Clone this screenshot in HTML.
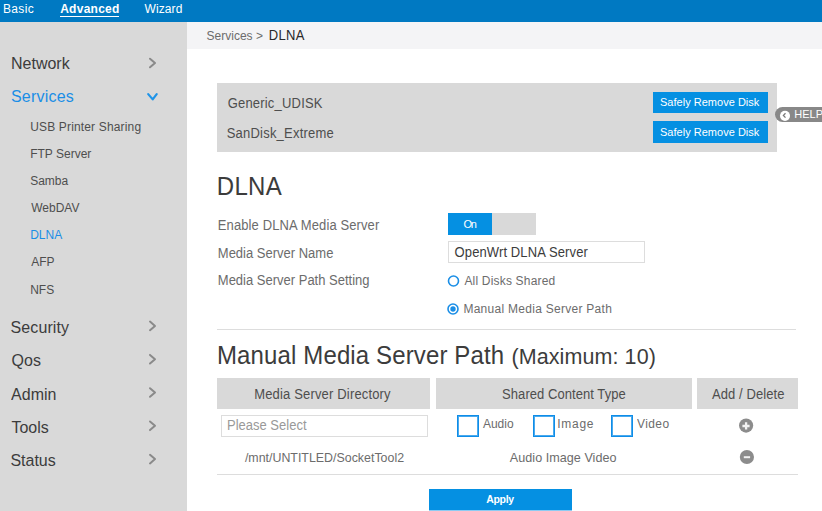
<!DOCTYPE html>
<html><head><meta charset="utf-8"><style>
html,body{margin:0;padding:0;width:822px;height:511px;overflow:hidden;background:#fff;position:relative;font-family:"Liberation Sans", sans-serif;}
body>div,body>svg{position:absolute;}
.t{white-space:nowrap;}
</style></head><body>
<div style="left:0px;top:0px;width:822px;height:22px;background:#0079c2;"></div>
<div style="left:60px;top:16px;width:59px;height:1px;background:#fff;"></div>
<div style="left:0px;top:22px;width:187px;height:489px;background:#d9d9d9;"></div>
<div style="left:187px;top:22px;width:635px;height:27px;background:#f4f4f6;"></div>
<div style="left:217px;top:83px;width:560px;height:69px;background:#d9d9d9;"></div>
<div style="left:653px;top:92px;width:115px;height:21px;background:#0590e2;"></div>
<div style="left:653px;top:121px;width:115px;height:22px;background:#0590e2;"></div>
<div style="left:775px;top:107px;width:55px;height:15px;background:#888;border-radius:8px 0 0 8px;"></div>
<div style="left:448px;top:213px;width:44px;height:22px;background:#0590e2;"></div>
<div style="left:492px;top:213px;width:44px;height:22px;background:#d9d9d9;"></div>
<div style="left:448px;top:241px;width:197px;height:22px;background:#fff;border:1px solid #ddd;box-sizing:border-box;"></div>
<div style="left:217px;top:329px;width:579px;height:1px;background:#ddd;"></div>
<div style="left:217px;top:378px;width:213px;height:31px;background:#d9d9d9;"></div>
<div style="left:436px;top:378px;width:256px;height:31px;background:#d9d9d9;"></div>
<div style="left:697px;top:378px;width:101px;height:31px;background:#d9d9d9;"></div>
<div style="left:221px;top:415px;width:207px;height:22px;background:#fff;border:1px solid #ddd;box-sizing:border-box;"></div>
<div style="left:457px;top:415px;width:22px;height:22px;background:#fff;border:1px solid #0e8de8;box-shadow:inset 0 0 0 1px rgba(14,141,232,0.75);box-sizing:border-box;"></div>
<div style="left:533px;top:415px;width:22px;height:22px;background:#fff;border:1px solid #0e8de8;box-shadow:inset 0 0 0 1px rgba(14,141,232,0.75);box-sizing:border-box;"></div>
<div style="left:611px;top:415px;width:22px;height:22px;background:#fff;border:1px solid #0e8de8;box-shadow:inset 0 0 0 1px rgba(14,141,232,0.75);box-sizing:border-box;"></div>
<div style="left:217px;top:474px;width:581px;height:1px;background:#ddd;"></div>
<div style="left:429px;top:489px;width:143px;height:21px;background:#0590e2;"></div>
<div style="left:429px;top:510px;width:143px;height:1px;background:#8ccbf2;"></div>
<div class="t" style="left:3.00px;top:3px;font-size:12px;line-height:12px;color:#fff;font-weight:400;letter-spacing:0.325px;transform:scaleY(1.06);transform-origin:0 10px;">Basic</div>
<div class="t" style="left:60.20px;top:3px;font-size:12px;line-height:12px;color:#fff;font-weight:700;letter-spacing:0.257px;transform:scaleY(1.06);transform-origin:0 10px;">Advanced</div>
<div class="t" style="left:144.50px;top:3px;font-size:12px;line-height:12px;color:#fff;font-weight:400;letter-spacing:0.100px;transform:scaleY(1.06);transform-origin:0 10px;">Wizard</div>
<div class="t" style="left:11.00px;top:56px;font-size:16px;line-height:16px;color:#3c3c3c;font-weight:400;letter-spacing:0.000px;transform:scaleY(1.06);transform-origin:0 13px;">Network</div>
<div class="t" style="left:11.00px;top:89px;font-size:16px;line-height:16px;color:#1a8ee6;font-weight:400;letter-spacing:0.200px;transform:scaleY(1.06);transform-origin:0 13px;">Services</div>
<div class="t" style="left:10.60px;top:320px;font-size:16px;line-height:16px;color:#3c3c3c;font-weight:400;letter-spacing:0.086px;transform:scaleY(1.06);transform-origin:0 13px;">Security</div>
<div class="t" style="left:11.60px;top:353px;font-size:16px;line-height:16px;color:#3c3c3c;font-weight:400;letter-spacing:0.000px;transform:scaleY(1.06);transform-origin:0 13px;">Qos</div>
<div class="t" style="left:11.10px;top:387px;font-size:16px;line-height:16px;color:#3c3c3c;font-weight:400;letter-spacing:0.000px;transform:scaleY(1.06);transform-origin:0 13px;">Admin</div>
<div class="t" style="left:11.40px;top:420px;font-size:16px;line-height:16px;color:#3c3c3c;font-weight:400;letter-spacing:0.000px;transform:scaleY(1.06);transform-origin:0 13px;">Tools</div>
<div class="t" style="left:10.40px;top:453px;font-size:16px;line-height:16px;color:#3c3c3c;font-weight:400;letter-spacing:0.000px;transform:scaleY(1.06);transform-origin:0 13px;">Status</div>
<div class="t" style="left:30.20px;top:121px;font-size:12px;line-height:12px;color:#4e4e4e;font-weight:400;letter-spacing:0.158px;transform:scaleY(1.06);transform-origin:0 10px;">USB Printer Sharing</div>
<div class="t" style="left:30.20px;top:148px;font-size:12px;line-height:12px;color:#4e4e4e;font-weight:400;letter-spacing:0.000px;transform:scaleY(1.06);transform-origin:0 10px;">FTP Server</div>
<div class="t" style="left:30.20px;top:175px;font-size:12px;line-height:12px;color:#4e4e4e;font-weight:400;letter-spacing:0.000px;transform:scaleY(1.06);transform-origin:0 10px;">Samba</div>
<div class="t" style="left:31.20px;top:202px;font-size:12px;line-height:12px;color:#4e4e4e;font-weight:400;letter-spacing:0.000px;transform:scaleY(1.06);transform-origin:0 10px;">WebDAV</div>
<div class="t" style="left:30.20px;top:229px;font-size:12px;line-height:12px;color:#1a8ee6;font-weight:400;letter-spacing:0.000px;transform:scaleY(1.06);transform-origin:0 10px;">DLNA</div>
<div class="t" style="left:31.20px;top:256px;font-size:12px;line-height:12px;color:#4e4e4e;font-weight:400;letter-spacing:0.000px;transform:scaleY(1.06);transform-origin:0 10px;">AFP</div>
<div class="t" style="left:30.20px;top:284px;font-size:12px;line-height:12px;color:#4e4e4e;font-weight:400;letter-spacing:0.000px;transform:scaleY(1.06);transform-origin:0 10px;">NFS</div>
<div class="t" style="left:206.60px;top:30px;font-size:12px;line-height:12px;color:#6c6c6c;font-weight:400;letter-spacing:0.000px;transform:scaleY(1.06);transform-origin:0 10px;">Services &gt;</div>
<div class="t" style="left:268.80px;top:29px;font-size:13px;line-height:13px;color:#2a2a2a;font-weight:400;letter-spacing:0.333px;transform:scaleY(1.06);transform-origin:0 11px;">DLNA</div>
<div class="t" style="left:227.70px;top:97px;font-size:13px;line-height:13px;color:#4e4e4e;font-weight:400;letter-spacing:0.192px;transform:scaleY(1.06);transform-origin:0 11px;">Generic_UDISK</div>
<div class="t" style="left:226.70px;top:127px;font-size:13px;line-height:13px;color:#4e4e4e;font-weight:400;letter-spacing:0.214px;transform:scaleY(1.06);transform-origin:0 11px;">SanDisk_Extreme</div>
<div class="t" style="left:660.00px;top:97px;font-size:11px;line-height:11px;color:#fff;font-weight:400;letter-spacing:0.018px;transform:scaleY(1.06);transform-origin:0 9px;">Safely Remove Disk</div>
<div class="t" style="left:660.00px;top:127px;font-size:11px;line-height:11px;color:#fff;font-weight:400;letter-spacing:0.018px;transform:scaleY(1.06);transform-origin:0 9px;">Safely Remove Disk</div>
<div class="t" style="left:794.30px;top:109px;font-size:11px;line-height:11px;color:#fff;font-weight:400;letter-spacing:0.000px;transform:scaleY(1.06);transform-origin:0 9px;">HELP</div>
<div class="t" style="left:216.80px;top:175px;font-size:24px;line-height:24px;color:#3c3c3c;font-weight:400;letter-spacing:0.300px;transform:scaleY(1.11);transform-origin:0 20px;">DLNA</div>
<div class="t" style="left:217.80px;top:219px;font-size:13px;line-height:13px;color:#6c6c6c;font-weight:400;letter-spacing:0.109px;transform:scaleY(1.06);transform-origin:0 11px;">Enable DLNA Media Server</div>
<div class="t" style="left:217.80px;top:247px;font-size:13px;line-height:13px;color:#6c6c6c;font-weight:400;letter-spacing:0.000px;transform:scaleY(1.06);transform-origin:0 11px;">Media Server Name</div>
<div class="t" style="left:217.80px;top:274px;font-size:13px;line-height:13px;color:#6c6c6c;font-weight:400;letter-spacing:0.000px;transform:scaleY(1.06);transform-origin:0 11px;">Media Server Path Setting</div>
<div class="t" style="left:463.40px;top:219px;font-size:11px;line-height:11px;color:#fff;font-weight:400;letter-spacing:-1.200px;transform:scaleY(1.06);transform-origin:0 9px;">On</div>
<div class="t" style="left:454.60px;top:246px;font-size:13px;line-height:13px;color:#3c3c3c;font-weight:400;letter-spacing:0.111px;transform:scaleY(1.06);transform-origin:0 11px;">OpenWrt DLNA Server</div>
<div class="t" style="left:464.40px;top:275px;font-size:12px;line-height:12px;color:#6c6c6c;font-weight:400;letter-spacing:0.187px;transform:scaleY(1.06);transform-origin:0 10px;">All Disks Shared</div>
<div class="t" style="left:463.40px;top:303px;font-size:12px;line-height:12px;color:#6c6c6c;font-weight:400;letter-spacing:0.278px;transform:scaleY(1.06);transform-origin:0 10px;">Manual Media Server Path</div>
<div class="t" style="left:217.00px;top:344px;font-size:24px;line-height:24px;color:#3c3c3c;font-weight:400;letter-spacing:0.130px;transform:scaleY(1.06);transform-origin:0 20px;">Manual Media Server Path</div>
<div class="t" style="left:511.40px;top:347px;font-size:21.5px;line-height:21.5px;color:#3c3c3c;font-weight:400;letter-spacing:0.092px;transform:scaleY(1.06);transform-origin:0 17px;">(Maximum: 10)</div>
<div class="t" style="left:254.20px;top:388px;font-size:13px;line-height:13px;color:#4e4e4e;font-weight:400;letter-spacing:0.167px;transform:scaleY(1.06);transform-origin:0 11px;">Media Server Directory</div>
<div class="t" style="left:502.10px;top:388px;font-size:13px;line-height:13px;color:#4e4e4e;font-weight:400;letter-spacing:0.056px;transform:scaleY(1.06);transform-origin:0 11px;">Shared Content Type</div>
<div class="t" style="left:711.90px;top:388px;font-size:13px;line-height:13px;color:#4e4e4e;font-weight:400;letter-spacing:0.100px;transform:scaleY(1.06);transform-origin:0 11px;">Add / Delete</div>
<div class="t" style="left:227.00px;top:419px;font-size:13px;line-height:13px;color:#999;font-weight:400;letter-spacing:0.000px;transform:scaleY(1.06);transform-origin:0 11px;">Please Select</div>
<div class="t" style="left:482.90px;top:418px;font-size:12px;line-height:12px;color:#6c6c6c;font-weight:400;letter-spacing:0.025px;transform:scaleY(1.06);transform-origin:0 10px;">Audio</div>
<div class="t" style="left:557.30px;top:418px;font-size:12px;line-height:12px;color:#6c6c6c;font-weight:400;letter-spacing:0.700px;transform:scaleY(1.06);transform-origin:0 10px;">Image</div>
<div class="t" style="left:637.00px;top:418px;font-size:12px;line-height:12px;color:#6c6c6c;font-weight:400;letter-spacing:0.400px;transform:scaleY(1.06);transform-origin:0 10px;">Video</div>
<div class="t" style="left:244.90px;top:452px;font-size:12.4px;line-height:12.4px;color:#6c6c6c;font-weight:400;letter-spacing:0.004px;transform:scaleY(1.06);transform-origin:0 10px;">/mnt/UNTITLED/SocketTool2</div>
<div class="t" style="left:509.80px;top:452px;font-size:12.6px;line-height:12.6px;color:#6c6c6c;font-weight:400;letter-spacing:0.031px;transform:scaleY(1.06);transform-origin:0 10px;">Audio Image Video</div>
<div class="t" style="left:486.20px;top:494px;font-size:10.5px;line-height:10.5px;color:#fff;font-weight:700;letter-spacing:-0.300px;transform:scaleY(1.06);transform-origin:0 9px;">Apply</div>
<svg style="left:446px;top:274px" width="14" height="14" viewBox="0 0 14 14"><circle cx="7.5" cy="7" r="5" fill="none" stroke="#1a8ee6" stroke-width="1.6"/></svg>
<svg style="left:446px;top:302px" width="14" height="14" viewBox="0 0 14 14"><circle cx="7" cy="7" r="5" fill="none" stroke="#1a8ee6" stroke-width="1.6"/><circle cx="7" cy="7" r="2.7" fill="#1a8ee6"/></svg>
<svg style="left:0;top:0" width="822" height="511"><path d="M148.2 94.1 L152.7 99.4 L156.7 94.1" fill="none" stroke="#1f94e8" stroke-width="2.2" stroke-linecap="round" stroke-linejoin="round"/><path d="M150 58.70 L155 63.00 L150 67.30" fill="none" stroke="#8a8a8a" stroke-width="2" stroke-linecap="round" stroke-linejoin="round"/><path d="M150 321.60 L155 325.90 L150 330.20" fill="none" stroke="#8a8a8a" stroke-width="2" stroke-linecap="round" stroke-linejoin="round"/><path d="M150 354.90 L155 359.20 L150 363.50" fill="none" stroke="#8a8a8a" stroke-width="2" stroke-linecap="round" stroke-linejoin="round"/><path d="M150 388.20 L155 392.50 L150 396.80" fill="none" stroke="#8a8a8a" stroke-width="2" stroke-linecap="round" stroke-linejoin="round"/><path d="M150 421.50 L155 425.80 L150 430.10" fill="none" stroke="#8a8a8a" stroke-width="2" stroke-linecap="round" stroke-linejoin="round"/><path d="M150 454.80 L155 459.10 L150 463.40" fill="none" stroke="#8a8a8a" stroke-width="2" stroke-linecap="round" stroke-linejoin="round"/><circle cx="785" cy="115.85" r="5.05" fill="#fff"/><path d="M785.5 113.2 L783.4 115.4 L785.5 117.6" fill="none" stroke="#777" stroke-width="1.3"/><circle cx="746.1" cy="425.6" r="7.1" fill="#8c8c8c"/><path d="M742.4 426 H749.6 M746.1 422.2 V429.4" stroke="#f2f2f2" stroke-width="2.3"/><circle cx="746.9" cy="457.0" r="7.1" fill="#8c8c8c"/><path d="M743.8 457.2 H750.1" stroke="#f2f2f2" stroke-width="2"/></svg>
</body></html>
